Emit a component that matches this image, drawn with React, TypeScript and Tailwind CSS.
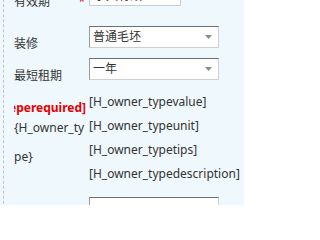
import React from "react";

function Arrow() {
  return (
    <svg width="7" height="4" viewBox="0 0 7 4" className="block">
      <polygon points="0,0 7,0 3.5,4" fill="#8a8a8a" />
    </svg>
  );
}

function Select({ value }: { value: string }) {
  return (
    <div className="flex h-[22px] w-[130px] items-center justify-between border border-t-[#6f6f6f] border-l-[#9a9a9a] border-r-[#cfcfcf] border-b-[#cfcfcf] bg-white pl-[3px] pr-[6px] text-[#333]">
      <span className="leading-[16px]">{value}</span>
      <Arrow />
    </div>
  );
}

export default function App() {
  return (
    <div className="h-[205px] w-[244px] overflow-hidden bg-[#eff8fd] font-['Noto_Sans','Noto_Sans_CJK_SC',sans-serif] text-[12px] text-[#333]">
      <div className="-mt-[16px] ml-[3px] min-h-[240px] border-l border-dashed border-[#c4c4c4] pl-[10px]">
        {/* Row 0 */}
        <div className="flex h-[22px]">
          <div className="flex w-[75px] justify-between pr-[4px] pt-[10px] leading-[16px]">
            <span>有效期</span>
            <span className="text-[#e00000]">*</span>
          </div>
          <div className="flex h-[22px] w-[92px] items-end border border-[#cdcdcd] bg-white pb-[1px] pl-[4px] leading-[16px] text-[#333]">
            永久有效
          </div>
        </div>
        {/* Row 1 */}
        <div className="mt-[20px] flex h-[22px]">
          <div className="w-[75px] pt-[10px] leading-[16px]">装修</div>
          <Select value="普通毛坯" />
        </div>
        {/* Row 2 */}
        <div className="mt-[10px] flex h-[22px]">
          <div className="w-[75px] pt-[10px] leading-[16px]">最短租期</div>
          <Select value="一年" />
        </div>
        {/* Template row */}
        <div className="mt-[10px] flex">
          <div className="w-[75px]">
            <div className="mt-[10px] flex justify-end overflow-hidden whitespace-nowrap pr-[3px] font-bold leading-[16px] text-[#e60000]">
              [H_owner_typeperequired]
            </div>
            <div className="-mt-[3px] break-all leading-[29px]">{"{H_owner_type}"}</div>
          </div>
          <div className="flex flex-col">
            <div className="leading-[24px]">[H_owner_typevalue]</div>
            <div className="leading-[24px]">[H_owner_typeunit]</div>
            <div className="leading-[24px]">[H_owner_typetips]</div>
            <div className="leading-[24px]">[H_owner_typedescription]</div>
            <div className="mt-[11px] h-[24px] w-[130px] border border-t-[#6f6f6f] border-l-[#9a9a9a] border-r-[#cfcfcf] border-b-[#cfcfcf] bg-white" />
          </div>
        </div>
      </div>
    </div>
  );
}
